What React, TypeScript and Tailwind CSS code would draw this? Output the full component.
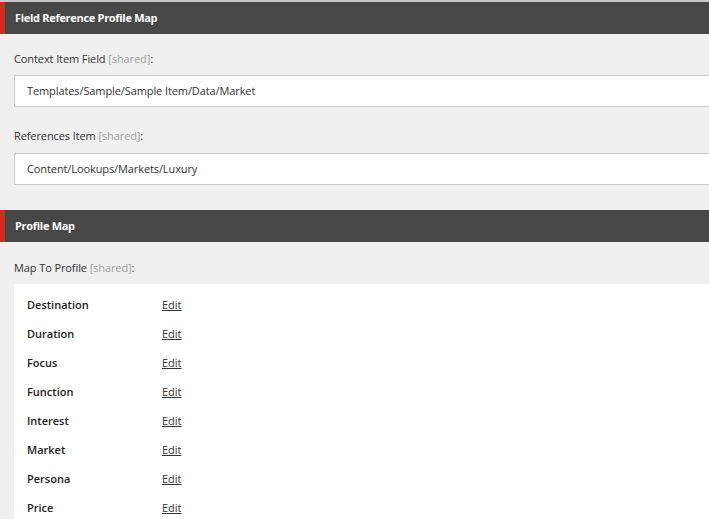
import React from "react";

const rows = ["Destination", "Duration", "Focus", "Function", "Interest", "Market", "Persona", "Price"];

function Header({ title }: { title: string }) {
  return (
    <div className="h-[32px] bg-[#474747] border-l-[5px] border-[#d8291d] flex items-center pl-[10px]">
      <span className="text-white font-bold text-[11px] leading-[16px] tracking-[-0.3px]">{title}</span>
    </div>
  );
}

function Label({ text }: { text: string }) {
  return (
    <div className="text-[11px] leading-[16px] tracking-[-0.1px] text-[#333]">
      {text} <span className="text-[#a0a0a0]">[shared]</span>:
    </div>
  );
}

function Input({ value }: { value: string }) {
  return (
    <div className="h-[32px] bg-white border border-[#cccccc] border-r-0 flex items-center pl-[12px] text-[11px] tracking-[-0.1px] text-[#333]">
      {value}
    </div>
  );
}

export default function App() {
  return (
    <div
      className="w-[709px] h-[519px] overflow-hidden bg-[#f0f0f0] border-t-2 border-[#c8c8c8]"
      style={{ fontFamily: '"Open Sans", "Liberation Sans", sans-serif' }}
    >
      <Header title="Field Reference Profile Map" />
      <div className="pl-[14px] pt-[17px] pb-[25px]">
        <Label text="Context Item Field" />
        <div className="mt-[8px]">
          <Input value="Templates/Sample/Sample Item/Data/Market" />
        </div>
        <div className="mt-[21px]">
          <Label text="References Item" />
        </div>
        <div className="mt-[9px]">
          <Input value="Content/Lookups/Markets/Luxury" />
        </div>
      </div>
      <Header title="Profile Map" />
      <div className="pl-[14px] pt-[18px]">
        <Label text="Map To Profile" />
        <div className="mt-[8px] bg-white pt-[7px] pl-[13px]">
          {rows.map((r) => (
            <div key={r} className="h-[29px] flex items-center text-[11px]">
              <span className="w-[135px] font-semibold text-[#222]">{r}</span>
              <a className="underline text-[#333] cursor-pointer">Edit</a>
            </div>
          ))}
        </div>
      </div>
    </div>
  );
}
